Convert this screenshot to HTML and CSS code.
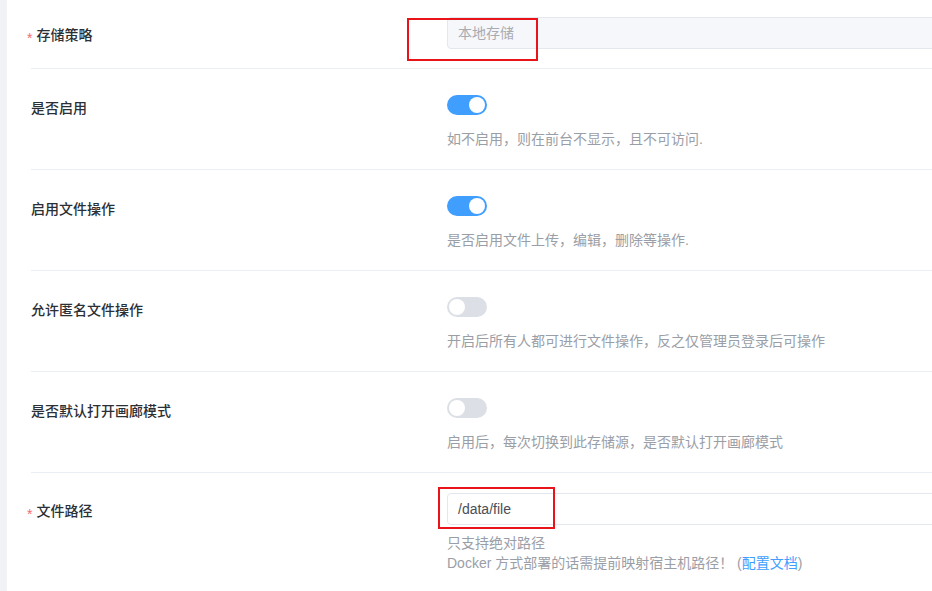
FILE: index.html
```html
<!DOCTYPE html>
<html lang="zh-CN">
<head>
<meta charset="utf-8">
<title>存储源设置</title>
<link rel="stylesheet" href="styles.css">
</head>
<body>
<div class="page">
  <aside class="strip"></aside>
  <main class="form">
    <div class="row row-input">
      <div class="label required">存储策略</div>
      <div class="content">
        <div class="input is-disabled">本地存储</div>
      </div>
    </div>
    <div class="row row-switch">
      <div class="label">是否启用</div>
      <div class="content">
        <div class="switch is-on"><span class="knob"></span></div>
        <div class="desc gap">如不启用，则在前台不显示，且不可访问.</div>
      </div>
    </div>
    <div class="row row-switch">
      <div class="label">启用文件操作</div>
      <div class="content">
        <div class="switch is-on"><span class="knob"></span></div>
        <div class="desc gap">是否启用文件上传，编辑，删除等操作.</div>
      </div>
    </div>
    <div class="row row-switch">
      <div class="label">允许匿名文件操作</div>
      <div class="content">
        <div class="switch"><span class="knob"></span></div>
        <div class="desc gap">开启后所有人都可进行文件操作，反之仅管理员登录后可操作</div>
      </div>
    </div>
    <div class="row row-switch">
      <div class="label">是否默认打开画廊模式</div>
      <div class="content">
        <div class="switch"><span class="knob"></span></div>
        <div class="desc gap">启用后，每次切换到此存储源，是否默认打开画廊模式</div>
      </div>
    </div>
    <div class="row row-input row-last">
      <div class="label required">文件路径</div>
      <div class="content">
        <div class="input">/data/file</div>
        <div class="desc help">只支持绝对路径</div>
        <div class="desc">Docker 方式部署的话需提前映射宿主机路径！ (<a class="link" href="#">配置文档</a>)</div>
      </div>
    </div>
  </main>
  <div class="mark mark-top"></div>
  <div class="mark mark-bottom"></div>
</div>
</body>
</html>
```

FILE: styles.css
```css
html, body {
  margin: 0;
  height: 100%;
  overflow: hidden;
  background: #ffffff;
}

body {
  font-family: "Liberation Sans", "Noto Sans CJK SC", sans-serif;
  font-size: 14px;
  color: #303133;
}

.page {
  display: flex;
  min-height: 100vh;
  position: relative;
}

.strip {
  width: 7px;
  flex: none;
  background: #f0f2f5;
}

.form {
  flex: 1;
  min-width: 0;
  padding-left: 24px;
}

.row {
  display: flex;
  border-bottom: 1px solid #ebeef5;
}

.row-input {
  padding: 17px 0 19px;
}

.row-last {
  padding-top: 20px;
  border-bottom: none;
}

.row-switch {
  padding: 26px 0 20px;
}

.label {
  width: 416px;
  flex: none;
  font-weight: 500;
  color: #2b2f36;
}

.row-input .label {
  box-sizing: border-box;
  height: 32px;
  line-height: 28px;
  padding-top: 4px;
}

.row-switch .label {
  line-height: 20px;
  padding-top: 3px;
}

.required::before {
  content: "*";
  color: #f56c6c;
  font-weight: 400;
  margin-left: -4px;
  margin-right: 4px;
  vertical-align: -3px;
}

.content {
  flex: 1;
  min-width: 0;
}

.input {
  box-sizing: border-box;
  width: calc(100% + 40px);
  height: 32px;
  line-height: 30px;
  padding: 0 10px;
  border: 1px solid #e4e7ed;
  border-radius: 4px;
  background: #ffffff;
  color: #4a4d54;
}

.input.is-disabled {
  background: #f5f7fa;
  color: #a8abb2;
}

.switch {
  box-sizing: border-box;
  width: 40px;
  height: 20px;
  padding: 2px;
  border-radius: 10px;
  background: #dcdfe6;
  display: flex;
  align-items: center;
  justify-content: flex-start;
}

.switch.is-on {
  background: #409eff;
  justify-content: flex-end;
}

.knob {
  width: 16px;
  height: 16px;
  border-radius: 50%;
  background: #ffffff;
}

.desc {
  line-height: 20px;
  color: #9a9ea6;
}

.desc.gap {
  margin-top: 14px;
}

.desc.help {
  margin-top: 8px;
}

.link {
  color: #409eff;
  text-decoration: none;
}

.mark {
  position: absolute;
  box-sizing: border-box;
  border: 2px solid #e8141a;
}

.mark-top {
  left: 407px;
  top: 18px;
  width: 131px;
  height: 43px;
}

.mark-bottom {
  left: 438px;
  top: 487px;
  width: 117px;
  height: 42px;
}
```
